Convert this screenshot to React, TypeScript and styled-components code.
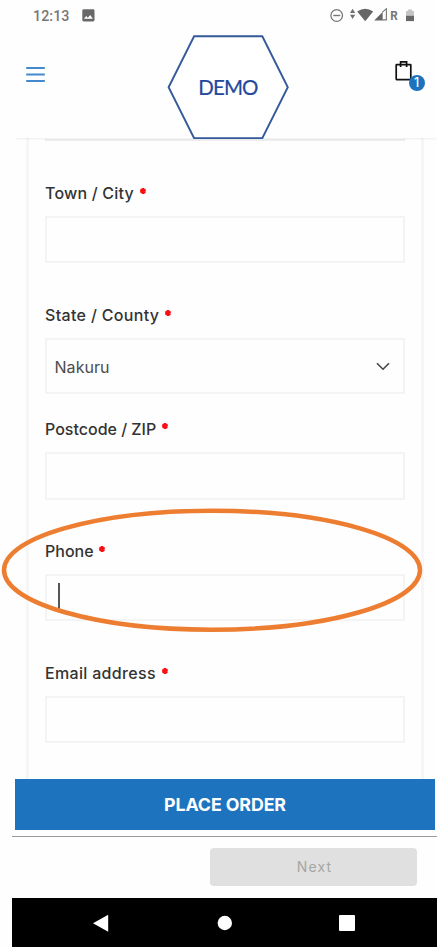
import React from "react";
import styled, { createGlobalStyle } from "styled-components";

const GlobalStyle = createGlobalStyle`
  * { box-sizing: border-box; }
  html, body { margin: 0; background: #fff; overflow: hidden; }
  body { font-family: Inter, "Noto Sans", sans-serif; }
`;

const Screen = styled.div`
  position: relative;
  width: 437px;
  height: 947px;
  padding-left: 12px;
  display: flex;
  flex-direction: column;
  overflow: hidden;
  background: #fefefe;
`;

const StatusBar = styled.div`
  height: 32px;
  flex: none;
  display: flex;
  align-items: center;
  justify-content: space-between;
  padding: 0 22px 0 21px;
  color: #747474;
`;

const StatusGroup = styled.div`
  display: flex;
  align-items: center;
`;

const Clock = styled.span`
  width: 49px;
  font: 500 14.3px/18px Roboto, sans-serif;
  letter-spacing: 0.05px;
  color: #777;
`;

const PhotoIcon = styled.svg`
  margin-top: -1px;
`;

const Header = styled.header`
  position: relative;
  z-index: 1;
  height: 106px;
  flex: none;
  display: flex;
  justify-content: space-between;
  padding: 0 12px 0 14px;
  background: #fefefe;
  box-shadow: 0 1px 2px rgba(0, 0, 0, 0.07);
  clip-path: inset(0 0 -4px 4px);
`;

const MenuIcon = styled.svg`
  margin-top: 33px;
`;

const LogoBox = styled.div`
  position: absolute;
  left: 155px;
  top: 3px;
  width: 122px;
  height: 104px;
  display: grid;
  place-items: center;

  > * { grid-area: 1 / 1; }
`;

const LogoText = styled.span`
  margin-top: -1px;
  font: 400 20.5px/24px Lato, sans-serif;
  letter-spacing: -0.9px;
  color: #24499b;
  -webkit-text-stroke: 0.2px #24499b;
`;

const Cart = styled.div`
  position: relative;
  width: 30px;
  height: 32px;
  margin-top: 28px;
`;

const Badge = styled.span`
  position: absolute;
  right: 0.5px;
  top: 15px;
  width: 16px;
  height: 16px;
  border-radius: 50%;
  background: #1e73be;
  color: #fff;
  font: 500 12.5px/15px Inter, sans-serif;
  text-align: center;
`;

const FormArea = styled.main`
  height: 641px;
  flex: none;
  overflow: hidden;
  padding: 0 13px 0 14px;
`;

const Card = styled.section`
  height: 660px;
  border: solid #f6f6f6;
  border-width: 0 3px;
  padding: 0 16px;
`;

const PreviousField = styled.div`
  height: 3px;
  border: solid #eee;
  border-width: 0 1px 2px;
  margin-bottom: 40px;
`;

const Field = styled.div<{ $gap: number }>`
  display: flex;
  flex-direction: column;
  margin-bottom: ${(p) => p.$gap}px;
`;

const Label = styled.label<{ $spacing: number }>`
  display: flex;
  height: 24px;
  margin-bottom: 11px;
  align-items: center;
  font-size: 16px;
  font-weight: 500;
  line-height: 24px;
  letter-spacing: ${(p) => p.$spacing}px;
  white-space: pre;
  color: #333;
`;

const Star = styled.svg`
  margin: -5px 0 0 4.7px;
`;

const Control = styled.div<{ $height: number }>`
  height: ${(p) => p.$height}px;
  border: 2px solid #f4f4f4;
  display: flex;
  align-items: center;
  justify-content: space-between;
  padding: 1px 13px 0 7.5px;
  font-size: 16px;
  letter-spacing: 0.05px;
  color: #4c4c4c;
`;

const Caret = styled.span`
  width: 2px;
  height: 26px;
  margin: -4px 0 0 3px;
  background: #555;
`;

const OrderButton = styled.button`
  height: 51px;
  flex: none;
  margin: 0 2.4px 0 3.4px;
  padding: 0;
  border: 0;
  background: #1e73be;
  color: #fff;
  font: 700 17.8px/51px Inter, sans-serif;
  letter-spacing: -0.1px;
`;

const Footer = styled.div`
  height: 62px;
  flex: none;
  margin-top: 6px;
  border-top: 1.5px solid #9b9b9b;
  display: flex;
  justify-content: flex-end;
  padding: 11px 20px 0 0;
`;

const NextButton = styled.button`
  width: 207px;
  height: 38px;
  border: 0;
  border-radius: 4px;
  background: #e0e0e0;
  color: #a6a6a6;
  font: 400 14px/36px Inter, sans-serif;
  letter-spacing: 1.1px;
  padding: 0 0 1px 2px;
`;

const SystemNav = styled.nav`
  height: 49px;
  flex: none;
  display: flex;
  align-items: center;
  justify-content: space-between;
  padding: 1px 81px 0 79px;
  background: #000;
`;

const Highlight = styled.svg`
  position: absolute;
  z-index: 2;
  left: 0;
  top: 505px;
  pointer-events: none;
`;

function RequiredMark() {
  return (
    <Star width="8" height="8" viewBox="0 0 8 8" stroke="#fc0d12" strokeWidth="2.3">
      <path d="M4 1v6M1.4 2.5l5.2 3M6.6 2.5l-5.2 3" />
    </Star>
  );
}

type FieldData = {
  label: string;
  spacing: number;
  height: number;
  gap: number;
  kind?: "select" | "focused";
};

const fields: FieldData[] = [
  { label: "Town / City", spacing: 0.2, height: 47, gap: 40 },
  { label: "State / County", spacing: 0.33, height: 56, gap: 22.5, kind: "select" },
  { label: "Postcode / ZIP", spacing: 0, height: 48.5, gap: 39 },
  { label: "Phone", spacing: 0, height: 47, gap: 40, kind: "focused" },
  { label: "Email address", spacing: 0.32, height: 47, gap: 40 },
];

export default function App() {
  return (
    <>
      <GlobalStyle />
      <Screen>
        <StatusBar>
          <StatusGroup>
            <Clock>12:13</Clock>
            <PhotoIcon width="13" height="13" viewBox="0 0 13 13">
              <rect x=".3" y=".3" width="12.2" height="12.2" rx="1.4" fill="#686868" />
              <path d="M2 9.8 4.2 7l1.6 1.8L8.2 6l2.7 3.8z" fill="#fff" />
            </PhotoIcon>
          </StatusGroup>
          <svg width="86" height="16" viewBox="329 8 86 16">
            <circle cx="336.7" cy="15.5" r="5.8" fill="none" stroke="#777" strokeWidth="1.3" />
            <path d="M333.2 15.5h7" stroke="#777" strokeWidth="1.4" />
            <path d="m350 13.1 2.6-4.3 2.6 4.3zM350 14.8h5.2l-2.6 4.3z" fill="#707070" />
            <path d="M357.2 11.5q8-5.6 16 0l-8 9.7z" fill="#666" />
            <path d="m374.2 20.4 8.4-8.4v8.4z" fill="#666" />
            <path d="m382.2 12.3 4.2-3.6v11.2h-4.2" fill="none" stroke="#777" strokeWidth="1.1" />
            <text x="390.2" y="20.1" fill="#777" fontFamily="Roboto" fontSize="13.7" fontWeight="700" textLength="7.5" lengthAdjust="spacingAndGlyphs">R</text>
            <path d="M406 11h2V9.6h4V11h2v5h-8z" fill="#c5c5c5" />
            <path d="M406 15.8h8v5.3h-8z" fill="#686868" />
          </svg>
        </StatusBar>
        <Header>
          <MenuIcon width="20" height="20" viewBox="0 0 20 20" stroke="#4389cc" strokeWidth="2">
            <path d="M.2 3h18.6M.2 9.5h18.6M.2 16h18.6" />
          </MenuIcon>
          <LogoBox>
            <svg width="122" height="104" viewBox="0 0 122 104" fill="#fff" stroke="#34599a" strokeWidth="1.9">
              <path d="m1.6 52.2 25.5-50.9h68.2l25.5 50.9-25.5 51H27.1z" />
            </svg>
            <LogoText>DEMO</LogoText>
          </LogoBox>
          <Cart>
            <svg width="18" height="22" viewBox="0 0 18 22" fill="none" stroke="#111" strokeWidth="1.7">
              <rect x="1.2" y="4.6" width="14.6" height="15" rx=".5" />
              <path d="M5.6 7V1.8h6V7" />
            </svg>
            <Badge>1</Badge>
          </Cart>
        </Header>
        <FormArea>
          <Card>
            <PreviousField />
            {fields.map((f) => (
              <Field key={f.label} $gap={f.gap}>
                <Label $spacing={f.spacing}>
                  {f.label}
                  <RequiredMark />
                </Label>
                <Control $height={f.height}>
                  {f.kind === "select" && (
                    <>
                      <span>Nakuru</span>
                      <svg width="14" height="9" viewBox="0 0 14 9" fill="none" stroke="#444" strokeWidth="1.6">
                        <path d="m1 1.2 6 6 6-6" />
                      </svg>
                    </>
                  )}
                  {f.kind === "focused" && <Caret />}
                </Control>
              </Field>
            ))}
          </Card>
        </FormArea>
        <OrderButton>PLACE ORDER</OrderButton>
        <Footer>
          <NextButton>Next</NextButton>
        </Footer>
        <SystemNav>
          <svg width="18" height="18" viewBox="0 0 18 18" fill="#fff">
            <path d="M2 9.2 17.2.7v17z" />
          </svg>
          <svg width="16" height="16" viewBox="0 0 16 16" fill="#fff">
            <circle cx="8.8" cy="8" r="7.2" />
          </svg>
          <svg width="18" height="18" viewBox="0 0 18 18" fill="#fff">
            <rect x="1" y="1" width="16" height="16" rx="1" />
          </svg>
        </SystemNav>
        <Highlight width="437" height="130" viewBox="0 0 437 130" fill="none" stroke="#ed7d31" strokeWidth="4.5">
          <ellipse cx="212" cy="65.2" rx="208" ry="59.5" />
        </Highlight>
      </Screen>
    </>
  );
}
